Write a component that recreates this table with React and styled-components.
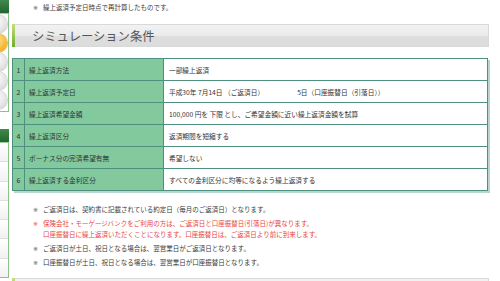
import styled, { createGlobalStyle } from "styled-components";

const GlobalStyle = createGlobalStyle`
  html, body {
    margin: 0;
    padding: 0;
    background: #fff;
    overflow: hidden;
    height: 281px;
  }
  body {
    font-family: "Noto Sans CJK JP", "Noto Sans", sans-serif;
    color: #333;
  }
`;

const Page = styled.div`
  display: flex;
  gap: 3px;
  width: 500px;
  height: 281px;
  overflow: hidden;
`;

/* ---- cropped side navigation (only its right edge shows) ---- */
const Side = styled.div`
  width: 9px;
  flex: none;
  overflow: hidden;
  display: flex;
  flex-direction: column;
`;

const SideHead = styled.div`
  height: 13px;
  flex: none;
  background: linear-gradient(#3f8a4c, #23652f);
  border-bottom: 1px solid #9fd0a4;
`;

const SidePanel = styled.div`
  border-right: 1px solid #8cc28a;
  border-bottom: 1px solid #8cc28a;
  background: #fff;
  padding: 1px 0 2px;
  display: flex;
  flex-direction: column;
  gap: 1px;
`;

const Circle = styled.div`
  width: 18px;
  height: 18px;
  flex: none;
  border-radius: 50%;
  margin-left: -11px;
  background: ${(p) =>
    p.$active
      ? "radial-gradient(circle at 40% 35%, #ffe9a6, #f6b52c 65%, #e69a10)"
      : "radial-gradient(circle at 40% 35%, #ffffff, #e4e4e4 60%, #c6c6c6)"};
  box-shadow: 0 0 0 1px ${(p) => (p.$active ? "#e7b55a" : "#d2d2d2")};
`;

const SideMenu = styled.div`
  margin-top: 17px;
  display: flex;
  flex-direction: column;
`;

const SideList = styled.div`
  border-right: 1px solid #8cc28a;
  border-bottom: 1px solid #8cc28a;
  height: 134px;
  display: flex;
  flex-direction: column;
`;

const SideRow = styled.div`
  flex: 1;
  border-bottom: 1px solid #dedede;
  background: linear-gradient(#fff, #f1f1f1);
  &:last-child { border-bottom: none; }
`;

/* ---- main column ---- */
const Main = styled.div`
  width: 478px;
  flex: none;
  padding-top: 2px;
  display: flex;
  flex-direction: column;
`;

const Note = styled.div`
  display: flex;
  font-size: 6.5px;
  line-height: 11px;
  color: ${(p) => (p.$red ? "#e8453c" : "#3a3a3a")};
  padding-left: 21px;
`;

const Mark = styled.span`
  width: 10px;
  flex: none;
  font-family: "DejaVu Sans", sans-serif;
  font-size: 6px;
  color: ${(p) => (p.$red ? "#e8453c" : "#555")};
`;

const Heading = styled.div`
  height: 21px;
  flex: none;
  margin-top: ${(p) => p.$top}px;
  margin-right: 1px;
  display: flex;
  align-items: center;
  border: 1px solid #d9d9d9;
  border-left: none;
  background: linear-gradient(#f2f2f2 0%, #ebebeb 50%, #dedede 52%, #dcdcdc 100%);
  &::before {
    content: "";
    align-self: stretch;
    width: 3px;
    margin-top: -1px;
    margin-bottom: -1px;
    background: linear-gradient(#c4df7c, #6fae2e);
  }
`;

const HeadingText = styled.h2`
  margin: 0 0 0 17px;
  font-size: 12.3px;
  font-weight: 400;
  color: #555;
`;

const Table = styled.table`
  margin-top: 11px;
  width: 476px;
  table-layout: fixed;
  border-collapse: collapse;
  font-size: 6.7px;
  color: #333;
  box-shadow: 2px 2px 0 #b7d6d0;
`;

const Cell = styled.td`
  height: 22px;
  box-sizing: border-box;
  padding: 0 0 0 ${(p) => (p.$value ? 5 : 4)}px;
  border: 1px solid #4e8f7f;
  background: ${(p) => (p.$value ? "#fff" : "#82c99e")};
  white-space: nowrap;
  overflow: hidden;
`;

const NumCell = styled(Cell)`
  padding: 0;
  text-align: center;
  font-size: 7px;
`;

const Gap = styled.span`
  display: inline-block;
  width: 33px;
`;

const Notes = styled.div`
  margin-top: 13px;
  display: flex;
  flex-direction: column;
  gap: 3px;
`;

const rows = [
  ["繰上返済方法", "一部繰上返済"],
  [
    "繰上返済予定日",
    <>
      平成30年 7月14日 （ご返済日）<Gap />5日（口座振替日（引落日））
    </>,
  ],
  ["繰上返済希望金額", "100,000 円を 下限 とし、ご希望金額に近い繰上返済金額を試算"],
  ["繰上返済区分", "返済期間を短縮する"],
  ["ボーナス分の完済希望有無", "希望しない"],
  ["繰上返済する金利区分", "すべての金利区分に均等になるよう繰上返済する"],
];

export default function App() {
  return (
    <>
      <GlobalStyle />
      <Page>
        <Side>
          <SideHead />
          <SidePanel>
            <Circle />
            <Circle $active />
            <Circle />
            <Circle />
            <Circle />
          </SidePanel>
          <SideMenu>
            <SideHead />
            <SideList>
              <SideRow />
              <SideRow />
              <SideRow />
              <SideRow />
              <SideRow />
              <SideRow />
              <SideRow />
            </SideList>
          </SideMenu>
        </Side>

        <Main>
          <Note>
            <Mark>※</Mark>
            <span>繰上返済予定日時点で再計算したものです。</span>
          </Note>

          <Heading $top={11}>
            <HeadingText>シミュレーション条件</HeadingText>
          </Heading>

          <Table>
            <colgroup>
              <col style={{ width: 12 }} />
              <col style={{ width: 139 }} />
              <col />
            </colgroup>
            <tbody>
              {rows.map(([label, value], i) => (
                <tr key={i}>
                  <NumCell>{i + 1}</NumCell>
                  <Cell>{label}</Cell>
                  <Cell $value>{value}</Cell>
                </tr>
              ))}
            </tbody>
          </Table>

          <Notes>
            <Note>
              <Mark>※</Mark>
              <span>ご返済日は、契約書に記載されている約定日（毎月のご返済日）となります。</span>
            </Note>
            <Note $red>
              <Mark $red>※</Mark>
              <span>
                保険会社・モーゲージバンクをご利用の方は、ご返済日と口座振替日(引落日)が異なります。
                <br />
                口座振替日に繰上返済いただくことになります。口座振替日は、ご返済日より前に到来します。
              </span>
            </Note>
            <Note>
              <Mark>※</Mark>
              <span>ご返済日が土日、祝日となる場合は、翌営業日がご返済日となります。</span>
            </Note>
            <Note>
              <Mark>※</Mark>
              <span>口座振替日が土日、祝日となる場合は、翌営業日が口座振替日となります。</span>
            </Note>
          </Notes>

          <Heading $top={10} />
        </Main>
      </Page>
    </>
  );
}
